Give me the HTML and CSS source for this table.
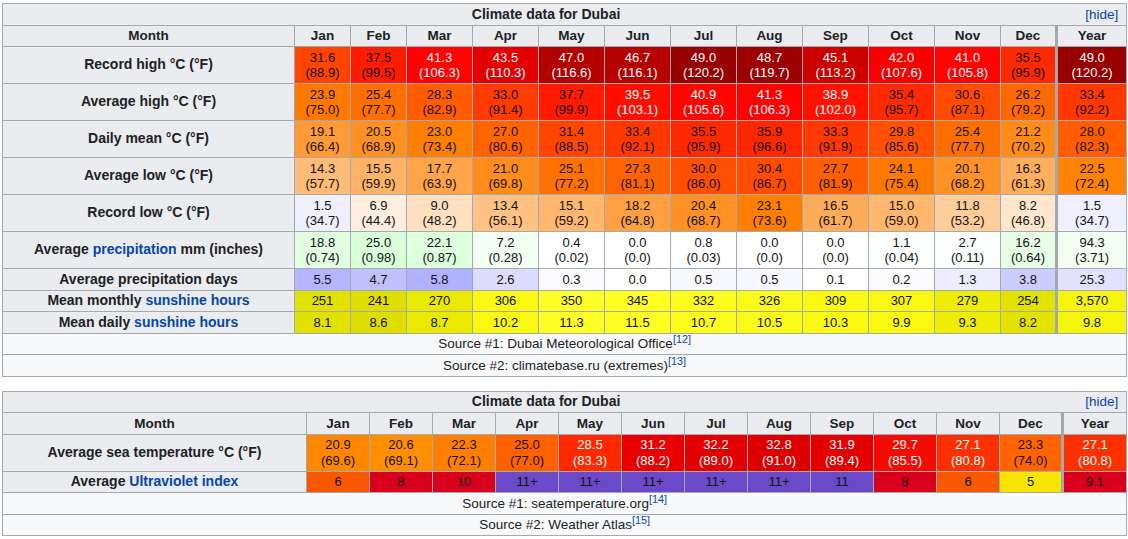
FILE: index.html
```html
<!DOCTYPE html>
<html lang="en">
<head>
<meta charset="utf-8">
<title>Climate data for Dubai</title>
<link rel="stylesheet" href="styles.css">
</head>
<body>
<table class="wb t1">
  <colgroup>
    <col class="c-lab">
    <col class="c-n"><col class="c-n"><col class="c-w"><col class="c-w"><col class="c-w"><col class="c-w"><col class="c-w"><col class="c-w"><col class="c-w"><col class="c-w"><col class="c-w"><col class="c-n">
    <col class="c-y">
  </colgroup>
  <tr><th class="title" colspan="14"><span class="hide">[hide]</span>Climate data for Dubai</th></tr>
  <tr class="hdr"><th>Month</th><th>Jan</th><th>Feb</th><th>Mar</th><th>Apr</th><th>May</th><th>Jun</th><th>Jul</th><th>Aug</th><th>Sep</th><th>Oct</th><th>Nov</th><th>Dec</th><th class="yr">Year</th></tr>
  <tr><th>Record high °C (°F)</th>
    <td style="background:rgb(255,68,0)">31.6<br>(88.9)</td>
    <td style="background:rgb(255,28,0)">37.5<br>(99.5)</td>
    <td class="w" style="background:rgb(255,1,0)">41.3<br>(106.3)</td>
    <td class="w" style="background:rgb(227,0,0)">43.5<br>(110.3)</td>
    <td class="w" style="background:rgb(179,0,0)">47.0<br>(116.6)</td>
    <td class="w" style="background:rgb(183,0,0)">46.7<br>(116.1)</td>
    <td class="w" style="background:rgb(152,0,0)">49.0<br>(120.2)</td>
    <td class="w" style="background:rgb(156,0,0)">48.7<br>(119.7)</td>
    <td class="w" style="background:rgb(205,0,0)">45.1<br>(113.2)</td>
    <td class="w" style="background:rgb(248,0,0)">42.0<br>(107.6)</td>
    <td class="w" style="background:rgb(255,3,0)">41.0<br>(105.8)</td>
    <td style="background:rgb(255,41,0)">35.5<br>(95.9)</td>
    <td class="yr w" style="background:rgb(152,0,0)">49.0<br>(120.2)</td>
  </tr>
  <tr><th>Average high °C (°F)</th>
    <td style="background:rgb(255,121,0)">23.9<br>(75.0)</td>
    <td style="background:rgb(255,111,0)">25.4<br>(77.7)</td>
    <td style="background:rgb(255,91,0)">28.3<br>(82.9)</td>
    <td style="background:rgb(255,59,0)">33.0<br>(91.4)</td>
    <td style="background:rgb(255,26,0)">37.7<br>(99.9)</td>
    <td class="w" style="background:rgb(255,14,0)">39.5<br>(103.1)</td>
    <td class="w" style="background:rgb(255,4,0)">40.9<br>(105.6)</td>
    <td class="w" style="background:rgb(255,1,0)">41.3<br>(106.3)</td>
    <td class="w" style="background:rgb(255,18,0)">38.9<br>(102.0)</td>
    <td style="background:rgb(255,42,0)">35.4<br>(95.7)</td>
    <td style="background:rgb(255,75,0)">30.6<br>(87.1)</td>
    <td style="background:rgb(255,105,0)">26.2<br>(79.2)</td>
    <td class="yr" style="background:rgb(255,56,0)">33.4<br>(92.2)</td>
  </tr>
  <tr><th>Daily mean °C (°F)</th>
    <td style="background:rgb(255,154,54)">19.1<br>(66.4)</td>
    <td style="background:rgb(255,145,34)">20.5<br>(68.9)</td>
    <td style="background:rgb(255,128,0)">23.0<br>(73.4)</td>
    <td style="background:rgb(255,100,0)">27.0<br>(80.6)</td>
    <td style="background:rgb(255,70,0)">31.4<br>(88.5)</td>
    <td style="background:rgb(255,56,0)">33.4<br>(92.1)</td>
    <td style="background:rgb(255,41,0)">35.5<br>(95.9)</td>
    <td style="background:rgb(255,39,0)">35.9<br>(96.6)</td>
    <td style="background:rgb(255,57,0)">33.3<br>(91.9)</td>
    <td style="background:rgb(255,81,0)">29.8<br>(85.6)</td>
    <td style="background:rgb(255,111,0)">25.4<br>(77.7)</td>
    <td style="background:rgb(255,140,25)">21.2<br>(70.2)</td>
    <td class="yr" style="background:rgb(255,93,0)">28.0<br>(82.3)</td>
  </tr>
  <tr><th>Average low °C (°F)</th>
    <td style="background:rgb(255,187,120)">14.3<br>(57.7)</td>
    <td style="background:rgb(255,179,103)">15.5<br>(59.9)</td>
    <td style="background:rgb(255,164,73)">17.7<br>(63.9)</td>
    <td style="background:rgb(255,141,28)">21.0<br>(69.8)</td>
    <td style="background:rgb(255,113,0)">25.1<br>(77.2)</td>
    <td style="background:rgb(255,98,0)">27.3<br>(81.1)</td>
    <td style="background:rgb(255,79,0)">30.0<br>(86.0)</td>
    <td style="background:rgb(255,76,0)">30.4<br>(86.7)</td>
    <td style="background:rgb(255,95,0)">27.7<br>(81.9)</td>
    <td style="background:rgb(255,120,0)">24.1<br>(75.4)</td>
    <td style="background:rgb(255,147,40)">20.1<br>(68.2)</td>
    <td style="background:rgb(255,174,92)">16.3<br>(61.3)</td>
    <td class="yr" style="background:rgb(255,131,7)">22.5<br>(72.4)</td>
  </tr>
  <tr><th>Record low °C (°F)</th>
    <td style="background:rgb(239,239,255)">1.5<br>(34.7)</td>
    <td style="background:rgb(255,238,222)">6.9<br>(44.4)</td>
    <td style="background:rgb(255,224,193)">9.0<br>(48.2)</td>
    <td style="background:rgb(255,194,132)">13.4<br>(56.1)</td>
    <td style="background:rgb(255,182,109)">15.1<br>(59.2)</td>
    <td style="background:rgb(255,161,66)">18.2<br>(64.8)</td>
    <td style="background:rgb(255,145,36)">20.4<br>(68.7)</td>
    <td style="background:rgb(255,127,0)">23.1<br>(73.6)</td>
    <td style="background:rgb(255,172,90)">16.5<br>(61.7)</td>
    <td style="background:rgb(255,183,110)">15.0<br>(59.0)</td>
    <td style="background:rgb(255,205,154)">11.8<br>(53.2)</td>
    <td style="background:rgb(255,230,204)">8.2<br>(46.8)</td>
    <td class="yr" style="background:rgb(239,239,255)">1.5<br>(34.7)</td>
  </tr>
  <tr><th>Average <a href="#" class="lk">precipitation</a> mm (inches)</th>
    <td style="background:rgb(226,255,226)">18.8<br>(0.74)</td>
    <td style="background:rgb(217,255,217)">25.0<br>(0.98)</td>
    <td style="background:rgb(221,255,221)">22.1<br>(0.87)</td>
    <td style="background:rgb(244,255,244)">7.2<br>(0.28)</td>
    <td style="background:rgb(254,255,254)">0.4<br>(0.02)</td>
    <td style="background:rgb(255,255,255)">0.0<br>(0.0)</td>
    <td style="background:rgb(254,255,254)">0.8<br>(0.03)</td>
    <td style="background:rgb(255,255,255)">0.0<br>(0.0)</td>
    <td style="background:rgb(255,255,255)">0.0<br>(0.0)</td>
    <td style="background:rgb(253,255,253)">1.1<br>(0.04)</td>
    <td style="background:rgb(251,255,251)">2.7<br>(0.11)</td>
    <td style="background:rgb(230,255,230)">16.2<br>(0.64)</td>
    <td class="yr" style="background:rgb(243,255,243)">94.3<br>(3.71)</td>
  </tr>
  <tr><th>Average precipitation days</th>
    <td style="background:rgb(181,181,255)">5.5</td>
    <td style="background:rgb(192,192,255)">4.7</td>
    <td style="background:rgb(177,177,255)">5.8</td>
    <td style="background:rgb(220,220,255)">2.6</td>
    <td style="background:rgb(251,251,255)">0.3</td>
    <td style="background:rgb(255,255,255)">0.0</td>
    <td style="background:rgb(248,248,255)">0.5</td>
    <td style="background:rgb(248,248,255)">0.5</td>
    <td style="background:rgb(254,254,255)">0.1</td>
    <td style="background:rgb(252,252,255)">0.2</td>
    <td style="background:rgb(237,237,255)">1.3</td>
    <td style="background:rgb(204,204,255)">3.8</td>
    <td class="yr" style="background:rgb(226,226,255)">25.3</td>
  </tr>
  <tr><th>Mean monthly <a href="#" class="lk">sunshine hours</a></th>
    <td style="background:rgb(226,226,0)">251</td>
    <td style="background:rgb(222,222,0)">241</td>
    <td style="background:rgb(234,234,0)">270</td>
    <td style="background:rgb(248,248,16)">306</td>
    <td style="background:rgb(255,255,40)">350</td>
    <td style="background:rgb(255,255,36)">345</td>
    <td style="background:rgb(253,253,28)">332</td>
    <td style="background:rgb(251,251,24)">326</td>
    <td style="background:rgb(249,249,18)">309</td>
    <td style="background:rgb(248,248,16)">307</td>
    <td style="background:rgb(238,238,4)">279</td>
    <td style="background:rgb(227,227,0)">254</td>
    <td class="yr" style="background:rgb(245,245,14)">3,570</td>
  </tr>
  <tr><th>Mean daily <a href="#" class="lk">sunshine hours</a></th>
    <td style="background:rgb(226,226,0)">8.1</td>
    <td style="background:rgb(222,222,0)">8.6</td>
    <td style="background:rgb(234,234,0)">8.7</td>
    <td style="background:rgb(248,248,16)">10.2</td>
    <td style="background:rgb(255,255,40)">11.3</td>
    <td style="background:rgb(255,255,36)">11.5</td>
    <td style="background:rgb(253,253,28)">10.7</td>
    <td style="background:rgb(251,251,24)">10.5</td>
    <td style="background:rgb(249,249,18)">10.3</td>
    <td style="background:rgb(248,248,16)">9.9</td>
    <td style="background:rgb(238,238,4)">9.3</td>
    <td style="background:rgb(227,227,0)">8.2</td>
    <td class="yr" style="background:rgb(245,245,14)">9.8</td>
  </tr>
  <tr><td class="src" colspan="14">Source #1: Dubai Meteorological Office<sup><a href="#" class="lk">[12]</a></sup></td></tr>
  <tr><td class="src" colspan="14">Source #2: climatebase.ru (extremes)<sup><a href="#" class="lk">[13]</a></sup></td></tr>
</table>

<table class="wb t2">
  <colgroup>
    <col class="c-lab2">
    <col class="c-m"><col class="c-m"><col class="c-m"><col class="c-m"><col class="c-m"><col class="c-m"><col class="c-m"><col class="c-m"><col class="c-m"><col class="c-m"><col class="c-m"><col class="c-m">
    <col class="c-y2">
  </colgroup>
  <tr><th class="title" colspan="14"><span class="hide">[hide]</span>Climate data for Dubai</th></tr>
  <tr class="hdr"><th>Month</th><th>Jan</th><th>Feb</th><th>Mar</th><th>Apr</th><th>May</th><th>Jun</th><th>Jul</th><th>Aug</th><th>Sep</th><th>Oct</th><th>Nov</th><th>Dec</th><th class="yr">Year</th></tr>
  <tr><th>Average sea temperature °C (°F)</th>
    <td style="background:rgb(255,135,0)">20.9<br>(69.6)</td>
    <td style="background:rgb(255,142,0)">20.6<br>(69.1)</td>
    <td style="background:rgb(255,128,0)">22.3<br>(72.1)</td>
    <td style="background:rgb(255,96,0)">25.0<br>(77.0)</td>
    <td class="w" style="background:rgb(255,40,0)">28.5<br>(83.3)</td>
    <td class="w" style="background:rgb(232,0,0)">31.2<br>(88.2)</td>
    <td class="w" style="background:rgb(226,0,0)">32.2<br>(89.0)</td>
    <td class="w" style="background:rgb(222,0,0)">32.8<br>(91.0)</td>
    <td class="w" style="background:rgb(228,0,0)">31.9<br>(89.4)</td>
    <td class="w" style="background:rgb(245,12,0)">29.7<br>(85.5)</td>
    <td class="w" style="background:rgb(255,48,0)">27.1<br>(80.8)</td>
    <td style="background:rgb(255,100,0)">23.3<br>(74.0)</td>
    <td class="yr w" style="background:rgb(255,48,0)">27.1<br>(80.8)</td>
  </tr>
  <tr><th>Average <a href="#" class="lk">Ultraviolet index</a></th>
    <td style="background:rgb(248,89,0)">6</td>
    <td style="background:rgb(216,0,29)">8</td>
    <td style="background:rgb(216,0,29)">10</td>
    <td style="background:rgb(107,73,200)">11+</td>
    <td style="background:rgb(107,73,200)">11+</td>
    <td style="background:rgb(107,73,200)">11+</td>
    <td style="background:rgb(107,73,200)">11+</td>
    <td style="background:rgb(107,73,200)">11+</td>
    <td style="background:rgb(107,73,200)">11</td>
    <td style="background:rgb(216,0,29)">8</td>
    <td style="background:rgb(248,89,0)">6</td>
    <td style="background:rgb(247,228,0)">5</td>
    <td class="yr" style="background:rgb(216,0,29)">9.1</td>
  </tr>
  <tr><td class="src" colspan="14">Source #1: seatemperature.org<sup><a href="#" class="lk">[14]</a></sup></td></tr>
  <tr><td class="src" colspan="14">Source #2: Weather Atlas<sup><a href="#" class="lk">[15]</a></sup></td></tr>
</table>
</body>
</html>
```

FILE: styles.css
```css
html, body {
  margin: 0;
  background: #ffffff;
}

body {
  padding: 3px 2px;
  font-family: "Liberation Sans", Arial, sans-serif;
  font-size: 13px;
  color: #202122;
}

.wb {
  width: 1124px;
  border-collapse: collapse;
  table-layout: fixed;
  text-align: center;
  line-height: 15.5px;
  border: 1px solid #a2a9b1;
  margin: 0 0 14px 0;
}

.wb th,
.wb td {
  border: 1px solid #a2a9b1;
  padding: 2.5px 4px;
  white-space: nowrap;
}

.wb th {
  background: #eaecf0;
  font-weight: bold;
  font-size: 14px;
  color: #202122;
}

.wb .hdr th {
  font-size: 13.5px;
}

.wb td {
  color: #111111;
  font-weight: normal;
  font-size: 13px;
}

.wb td.w {
  color: #ffffff;
}

.wb .yr {
  border-left: 3px solid #a2a9b1;
}

.wb td.src {
  background: #f8f9fa;
  color: #202122;
  font-size: 13.5px;
}

.title .hide {
  float: right;
  font-weight: normal;
  font-size: 13.5px;
  color: #0645ad;
  margin-right: 4px;
}

.lk {
  color: #0645ad;
  text-decoration: none;
}

sup {
  font-size: 80%;
  line-height: 0;
  vertical-align: super;
}

.c-lab { width: 292px; }
.c-n { width: 56px; }
.c-w { width: 66px; }
.c-y { width: 70px; }

.c-lab2 { width: 304px; }
.c-m { width: 63px; }
.c-y2 { width: 64px; }
```
